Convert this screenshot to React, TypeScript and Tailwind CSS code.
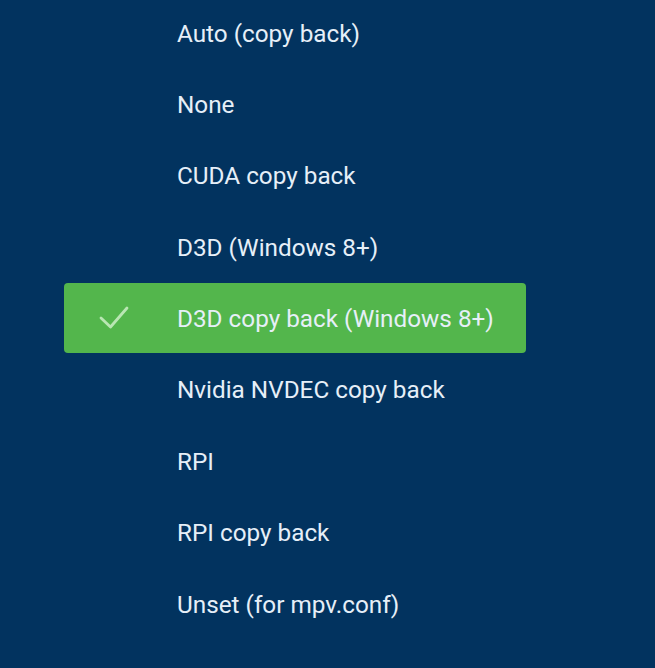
const options = [
  'Auto (copy back)',
  'None',
  'CUDA copy back',
  'D3D (Windows 8+)',
  'D3D copy back (Windows 8+)',
  'Nvidia NVDEC copy back',
  'RPI',
  'RPI copy back',
  'Unset (for mpv.conf)',
];

const selected = 4;

export default function App() {
  return (
    <div className="w-[655px] h-[668px] bg-[#02335f] overflow-hidden font-['Roboto',sans-serif]">
      <ul className="-mt-[3px] pl-[64px] w-[526px]">
        {options.map((label, i) => (
          <li key={label} className="h-[71.375px] flex items-center">
            <div
              className={
                'w-full h-[70px] flex items-center rounded-[4px] ' +
                (i === selected ? 'bg-[#53b64c]' : '')
              }
            >
              <div className="w-[113px] h-[70px] shrink-0">
                {i === selected && (
                  <svg width="113" height="70" viewBox="0 0 113 70" fill="none">
                    <path
                      d="M37 35l9.5 9L63 25"
                      stroke="#b9e6b3"
                      strokeWidth="2.8"
                      strokeLinecap="round"
                      strokeLinejoin="round"
                    />
                  </svg>
                )}
              </div>
              <span className="text-[24.3px] text-[#e6eff8] leading-none pt-[2px]">{label}</span>
            </div>
          </li>
        ))}
      </ul>
    </div>
  );
}
